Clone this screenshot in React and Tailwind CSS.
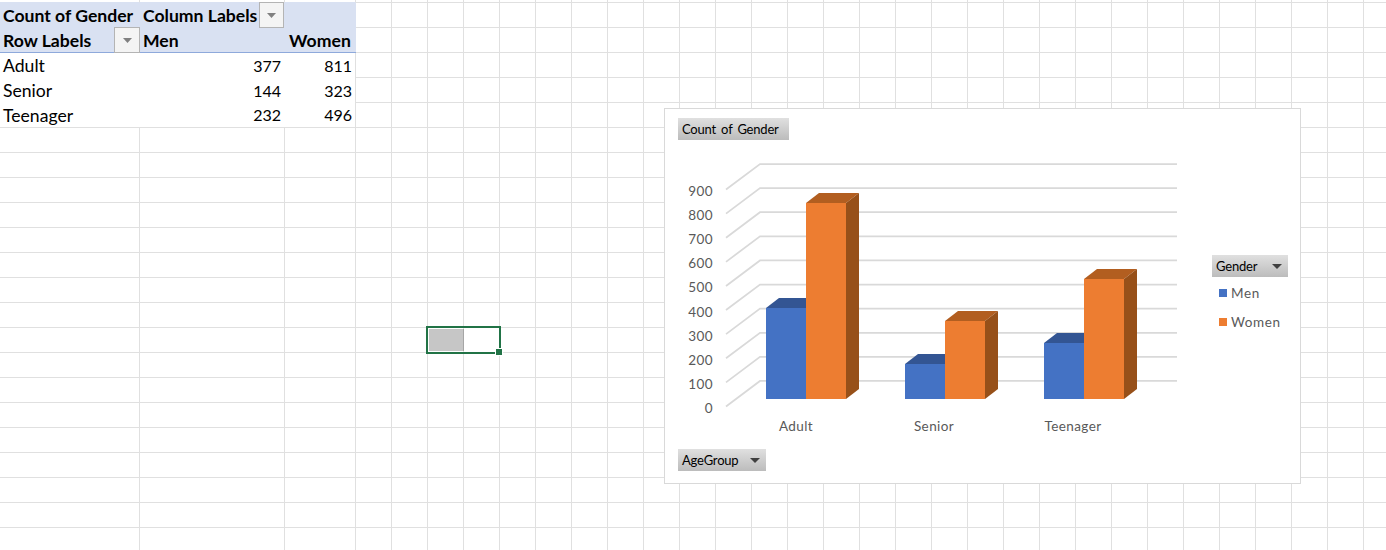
const COL_COUNT = 29;
const ROW_COUNT = 22;
const FONT = "font-['Lato','Liberation_Sans',sans-serif]";

const yLabels = [900, 800, 700, 600, 500, 400, 300, 200, 100, 0];
const bars = [
  { x: 766, top: 308, fill: '#4472c4', topFill: '#335593', side: '#2f5597' },
  { x: 806, top: 203, fill: '#ed7d31', topFill: '#b25e20', side: '#975019' },
  { x: 905, top: 364, fill: '#4472c4', topFill: '#335593', side: '#2f5597' },
  { x: 945, top: 321, fill: '#ed7d31', topFill: '#b25e20', side: '#975019' },
  { x: 1044, top: 343, fill: '#4472c4', topFill: '#335593', side: '#2f5597' },
  { x: 1084, top: 279, fill: '#ed7d31', topFill: '#b25e20', side: '#975019' },
];
const BAR_BOTTOM = 399;
const BAR_W = 40;
const DX = 13;
const DY = 10;

function FilterButton({ className }) {
  return (
    <div className={`-mt-px flex h-[26px] shrink-0 items-center justify-center self-start border border-[#b4b4b4] bg-[#f4f4f4] ${className}`}>
      <svg width="9" height="5" viewBox="0 0 9 5">
        <path d="M0 0h9L4.5 5z" fill="#808080" />
      </svg>
    </div>
  );
}

function Caret() {
  return (
    <svg width="10" height="5" viewBox="0 0 10 5">
      <path d="M0 0h10L5 5z" fill="#404040" />
    </svg>
  );
}

function FieldButton({ label, caret, className }) {
  return (
    <div className={`flex h-[22px] items-center justify-between bg-gradient-to-b from-[#e0e0e0] to-[#bcbcbc] pl-1 pr-[6px] text-[13px] text-black ${className}`}>
      <span className="pt-[2px] tracking-[-0.2px] [word-spacing:2px]">{label}</span>
      {caret && <Caret />}
    </div>
  );
}

function BlankCells() {
  return Array.from({ length: COL_COUNT }, (_, i) => (
    <div key={i} className="h-full w-9 shrink-0 border-r border-b border-[#e0e0e0]" />
  ));
}

function PivotRow({ label, men, women, last }) {
  const line = last ? 'border-b border-[#e0e0e0]' : '';
  return (
    <div className="flex h-[25px] text-[17.6px] text-black">
      <div className={`flex w-[140px] shrink-0 items-center pt-[2px] pl-[3px] ${line}`}>{label}</div>
      <div className={`flex w-[145px] shrink-0 items-center justify-end pr-[4px] text-[16px] ${line}`}>{men}</div>
      <div className={`flex w-[71px] shrink-0 items-center justify-end border-r border-[#e0e0e0] pr-[3px] text-[16px] ${line}`}>{women}</div>
      <BlankCells />
    </div>
  );
}

function PlotArea() {
  return (
    <svg width="522" height="309" viewBox="678 140 522 309" className="shrink-0">
      {yLabels.map((v, i) => {
        const y = 164 + i * 24.11;
        return (
          <g key={v}>
            <path d={`M726 ${y + 25.5}L760 ${y}H1177`} fill="none" stroke="#d9d9d9" strokeWidth="1.75" />
            <text x="713" y={y + 32} textAnchor="end" fontSize="13.5" letterSpacing="0.4" fill="#595959">{v}</text>
          </g>
        );
      })}
      {bars.map((b) => (
        <g key={b.x}>
          <path d={`M${b.x} ${b.top}l${DX} ${-DY}h${BAR_W}l${-DX} ${DY}z`} fill={b.topFill} />
          <path d={`M${b.x + BAR_W} ${b.top}l${DX} ${-DY}V${BAR_BOTTOM - DY}l${-DX} ${DY}z`} fill={b.side} />
          <rect x={b.x} y={b.top} width={BAR_W} height={BAR_BOTTOM - b.top} fill={b.fill} />
        </g>
      ))}
      <text x="796" y="431" textAnchor="middle" fontSize="13.5" letterSpacing="0.4" fill="#595959">Adult</text>
      <text x="934" y="431" textAnchor="middle" fontSize="13.5" letterSpacing="0.4" fill="#595959">Senior</text>
      <text x="1073" y="431" textAnchor="middle" fontSize="13.5" letterSpacing="0.4" fill="#595959">Teenager</text>
    </svg>
  );
}

function Legend() {
  return (
    <div className="ml-3 flex w-[76px] shrink-0 flex-col pt-[115px]">
      <FieldButton label="Gender" caret className="w-[76px]" />
      <div className="mt-[6px] flex h-[20px] items-center gap-1 pl-[7px] text-[13.5px] tracking-[0.6px] text-[#595959]">
        <span className="h-2 w-2 bg-[#4472c4]" />
        Men
      </div>
      <div className="mt-[9px] flex h-[20px] items-center gap-1 pl-[7px] text-[13.5px] tracking-[0.6px] text-[#595959]">
        <span className="h-2 w-2 bg-[#ed7d31]" />
        Women
      </div>
    </div>
  );
}

export default function App() {
  const emptyRows = Array.from({ length: ROW_COUNT - 5 }, (_, i) => i);

  return (
    <div className={`relative h-[550px] w-[1386px] overflow-hidden bg-white ${FONT}`}>
      {/* top sliver of the row above */}
      <div className="flex h-[3px]">
        <div className="h-full w-[140px] shrink-0 border-r border-b border-r-[#e0e0e0] border-b-[#d9e1f2]" />
        <div className="h-full w-[145px] shrink-0 border-r border-b border-r-[#e0e0e0] border-b-[#d9e1f2]" />
        <div className="h-full w-[71px] shrink-0 border-r border-b border-r-[#e0e0e0] border-b-[#d9e1f2]" />
        <BlankCells />
      </div>

      {/* pivot header */}
      <div className="flex h-[25px] text-[17.6px] font-bold text-black">
        <div className="flex w-[140px] shrink-0 items-center bg-[#d9e1f2] pt-[2px] pl-[3px] whitespace-nowrap">Count of Gender</div>
        <div className="flex w-[145px] shrink-0 items-center justify-between bg-[#d9e1f2] pr-px pl-[3px] whitespace-nowrap">
          <span className="pt-[2px]">Column Labels</span>
          <FilterButton className="w-[25px]" />
        </div>
        <div className="w-[71px] shrink-0 bg-[#d9e1f2]" />
        <BlankCells />
      </div>
      <div className="flex h-[25px] text-[17.6px] font-bold text-black">
        <div className="flex w-[140px] shrink-0 items-center justify-between border-b border-[#8ea9db] bg-[#d9e1f2] pl-[3px]">
          <span className="pt-[2px]">Row Labels</span>
          <FilterButton className="w-[26px]" />
        </div>
        <div className="flex w-[145px] shrink-0 items-center border-b border-[#8ea9db] bg-[#d9e1f2] pt-[2px] pl-[3px]">Men</div>
        <div className="flex w-[71px] shrink-0 items-center justify-end border-b border-[#8ea9db] bg-[#d9e1f2] pt-[2px] pr-[5px] tracking-[0.1px]">Women</div>
        <BlankCells />
      </div>

      <PivotRow label="Adult" men="377" women="811" />
      <PivotRow label="Senior" men="144" women="323" />
      <PivotRow label="Teenager" men="232" women="496" last />

      {emptyRows.map((r) => (
        <div key={r} className="flex h-[25px]">
          <div className="h-full w-[140px] shrink-0 border-r border-b border-[#e0e0e0]" />
          <div className="h-full w-[145px] shrink-0 border-r border-b border-[#e0e0e0]" />
          <div className="h-full w-[71px] shrink-0 border-r border-b border-[#e0e0e0]" />
          <BlankCells />
        </div>
      ))}

      {/* selected cell, with the leftover grey shape inside */}
      <div className="absolute top-[326px] left-[426px] h-[28px] w-[75px] border-2 border-[#217346] p-[1px]">
        <div className="h-[22px] w-[35px] border-r border-[#a6a6a6] bg-[#c6c6c6]" />
      </div>
      <div className="absolute top-[349px] left-[496px] h-[6px] w-[6px] bg-[#217346] outline outline-1 outline-white" />

      {/* pivot chart floating over the sheet */}
      <div className="absolute top-[108px] left-[664px] flex h-[376px] w-[637px] flex-col border border-[#d9d9d9] bg-white pt-[9px] pl-[13px]">
        <FieldButton label="Count of Gender" className="w-[111px]" />
        <div className="flex h-[309px]">
          <PlotArea />
          <Legend />
        </div>
        <FieldButton label="AgeGroup" caret className="w-[88px]" />
      </div>
    </div>
  );
}
